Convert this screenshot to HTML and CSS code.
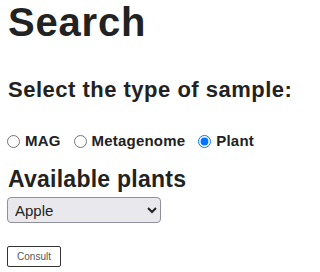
FILE: index.html
```html
<!DOCTYPE html>
<html>
<head>
<meta charset="utf-8">
<link rel="stylesheet" href="styles.css">
</head>
<body>
<main class="page">
  <h1 class="title">Search</h1>
  <h2 class="subtitle">Select the type of sample:</h2>
  <div class="types">
    <label class="opt"><input type="radio" name="t"><span>MAG</span></label>
    <label class="opt"><input type="radio" name="t"><span>Metagenome</span></label>
    <label class="opt"><input type="radio" name="t" checked><span>Plant</span></label>
  </div>
  <h2 class="subtitle plants">Available plants</h2>
  <div class="selwrap">
    <select class="sel"><option>Apple</option></select>
  </div>
  <div class="actions">
    <button class="btn">Consult</button>
  </div>
</main>
</body>
</html>
```
FILE: styles.css
```css
html, body { margin: 0; padding: 0; background: #fff; }
body { font-family: "Liberation Sans", Arial, sans-serif; color: #222; }
.page { display: flex; flex-direction: column; align-items: flex-start; padding: 2px 8px 0; }
.title { margin: 0; font-size: 40px; line-height: 40px; font-weight: 700; letter-spacing: 0.8px; color: #222; }
.subtitle { margin: 36px 0 0; font-size: 22px; line-height: 24px; font-weight: 700; color: #222; letter-spacing: 0.5px; }
.types { display: flex; align-items: center; gap: 13px; margin-top: 31px; margin-left: -1px; }
.opt { display: flex; align-items: center; gap: 5px; font-size: 15px; font-weight: 700; line-height: 16px; letter-spacing: 0.2px; }
.opt input { margin: 0; width: 13px; height: 13px; }
.plants { margin-top: 18px; font-size: 23px; letter-spacing: 0.25px; }
.selwrap { margin-top: 6px; margin-left: -1px; }
.sel { box-sizing: border-box; width: 154px; height: 26px; font-family: "Liberation Sans", Arial, sans-serif; font-size: 15px; color: #222; background: #e9e9ed; border: 1px solid #8f8f9d; border-radius: 4px; padding: 0 3px; }
.actions { margin-top: 23px; margin-left: -1px; }
.btn { box-sizing: border-box; width: 54px; height: 21px; font-family: "Liberation Sans", Arial, sans-serif; font-size: 10px; color: #555; background: #fff; border: 1px solid #333; border-radius: 2px; padding: 0; }
```
